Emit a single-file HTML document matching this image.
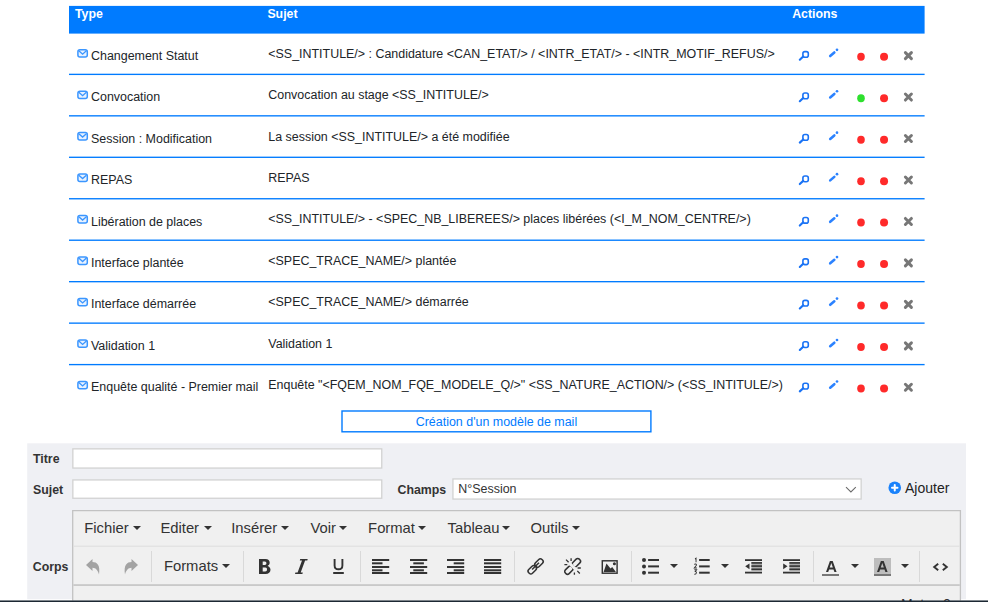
<!DOCTYPE html>
<html><head><meta charset="utf-8">
<style>
*{box-sizing:border-box}
html,body{margin:0;padding:0;background:#fff;width:992px;height:606px;overflow:hidden;position:relative;font-family:"Liberation Sans",sans-serif;color:#212529}
.ov{position:absolute;left:0;top:0}
.t{position:absolute;white-space:nowrap;font-size:12.45px;line-height:14px;color:#212529}
.t.h{color:#fff;font-weight:bold}
.lbl{position:absolute;font-weight:bold;font-size:12.35px;line-height:14px;color:#333}
.bline{position:absolute;left:0;top:0}
.ed{position:absolute;left:72px;top:510px;width:889px;height:90.5px;background:#f0f0f0;border:1px solid #c2c2c2;border-bottom:0}
.mb{position:absolute;font-size:14px;line-height:16px;color:#333;white-space:nowrap}
.car{position:absolute;width:0;height:0;border-top:4px solid #333;border-left:4px solid transparent;border-right:4px solid transparent}
.sep{position:absolute;top:551px;width:1px;height:31px;background:#d9d9d9}
.tic{position:absolute;overflow:visible}

</style></head><body>
<svg class="ov" width="992" height="606" viewBox="0 0 992 606"><rect x="69" y="5.9" width="855.6" height="27.7" fill="#007bff"/><rect x="69" y="73.70" width="855.6" height="1.35" fill="#007bff"/><rect x="69" y="115.16" width="855.6" height="1.35" fill="#007bff"/><rect x="69" y="156.62" width="855.6" height="1.35" fill="#007bff"/><rect x="69" y="198.08" width="855.6" height="1.35" fill="#007bff"/><rect x="69" y="239.54" width="855.6" height="1.35" fill="#007bff"/><rect x="69" y="281.00" width="855.6" height="1.35" fill="#007bff"/><rect x="69" y="322.46" width="855.6" height="1.35" fill="#007bff"/><rect x="69" y="363.92" width="855.6" height="1.35" fill="#007bff"/><g transform="translate(77.10,48.90)"><rect x="0.8" y="0.8" width="9.4" height="7.4" rx="2" fill="#e8f2ff" stroke="#3b96ff" stroke-width="1.5"/><path d="M1.7 1.9 L5.5 5.3 L9.3 1.9" fill="none" stroke="#3b96ff" stroke-width="1.35"/></g><g transform="translate(798.2,50.30)"><rect x="4.7" y="1.3" width="5.4" height="5.7" rx="2" fill="none" stroke="#1a73f5" stroke-width="1.6"/><path d="M1.6 9.4 L5 6.2" stroke="#1a73f5" stroke-width="2.1" stroke-linecap="round"/></g><g transform="translate(828.3,47.50)"><path d="M1.9 8.5 L6 5" stroke="#2b82ff" stroke-width="2.6" stroke-linecap="round"/><circle cx="8.7" cy="2.3" r="1.35" fill="#2b82ff"/></g><ellipse cx="861" cy="56.75" rx="3.8" ry="4" fill="#ff2a2a"/><ellipse cx="884.05" cy="56.75" rx="4" ry="4" fill="#ff2a2a"/><g transform="translate(903.5,50.70)"><path d="M1.9 1.9 L7.9 7.9 M7.9 1.9 L1.9 7.9" stroke="#777" stroke-width="3" stroke-linecap="round"/></g><g transform="translate(77.10,90.36)"><rect x="0.8" y="0.8" width="9.4" height="7.4" rx="2" fill="#e8f2ff" stroke="#3b96ff" stroke-width="1.5"/><path d="M1.7 1.9 L5.5 5.3 L9.3 1.9" fill="none" stroke="#3b96ff" stroke-width="1.35"/></g><g transform="translate(798.2,91.76)"><rect x="4.7" y="1.3" width="5.4" height="5.7" rx="2" fill="none" stroke="#1a73f5" stroke-width="1.6"/><path d="M1.6 9.4 L5 6.2" stroke="#1a73f5" stroke-width="2.1" stroke-linecap="round"/></g><g transform="translate(828.3,88.96)"><path d="M1.9 8.5 L6 5" stroke="#2b82ff" stroke-width="2.6" stroke-linecap="round"/><circle cx="8.7" cy="2.3" r="1.35" fill="#2b82ff"/></g><ellipse cx="861" cy="98.21" rx="3.8" ry="4" fill="#2ee02e"/><ellipse cx="884.05" cy="98.21" rx="4" ry="4" fill="#ff2a2a"/><g transform="translate(903.5,92.16)"><path d="M1.9 1.9 L7.9 7.9 M7.9 1.9 L1.9 7.9" stroke="#777" stroke-width="3" stroke-linecap="round"/></g><g transform="translate(77.10,131.82)"><rect x="0.8" y="0.8" width="9.4" height="7.4" rx="2" fill="#e8f2ff" stroke="#3b96ff" stroke-width="1.5"/><path d="M1.7 1.9 L5.5 5.3 L9.3 1.9" fill="none" stroke="#3b96ff" stroke-width="1.35"/></g><g transform="translate(798.2,133.22)"><rect x="4.7" y="1.3" width="5.4" height="5.7" rx="2" fill="none" stroke="#1a73f5" stroke-width="1.6"/><path d="M1.6 9.4 L5 6.2" stroke="#1a73f5" stroke-width="2.1" stroke-linecap="round"/></g><g transform="translate(828.3,130.42)"><path d="M1.9 8.5 L6 5" stroke="#2b82ff" stroke-width="2.6" stroke-linecap="round"/><circle cx="8.7" cy="2.3" r="1.35" fill="#2b82ff"/></g><ellipse cx="861" cy="139.67" rx="3.8" ry="4" fill="#ff2a2a"/><ellipse cx="884.05" cy="139.67" rx="4" ry="4" fill="#ff2a2a"/><g transform="translate(903.5,133.62)"><path d="M1.9 1.9 L7.9 7.9 M7.9 1.9 L1.9 7.9" stroke="#777" stroke-width="3" stroke-linecap="round"/></g><g transform="translate(77.10,173.28)"><rect x="0.8" y="0.8" width="9.4" height="7.4" rx="2" fill="#e8f2ff" stroke="#3b96ff" stroke-width="1.5"/><path d="M1.7 1.9 L5.5 5.3 L9.3 1.9" fill="none" stroke="#3b96ff" stroke-width="1.35"/></g><g transform="translate(798.2,174.68)"><rect x="4.7" y="1.3" width="5.4" height="5.7" rx="2" fill="none" stroke="#1a73f5" stroke-width="1.6"/><path d="M1.6 9.4 L5 6.2" stroke="#1a73f5" stroke-width="2.1" stroke-linecap="round"/></g><g transform="translate(828.3,171.88)"><path d="M1.9 8.5 L6 5" stroke="#2b82ff" stroke-width="2.6" stroke-linecap="round"/><circle cx="8.7" cy="2.3" r="1.35" fill="#2b82ff"/></g><ellipse cx="861" cy="181.13" rx="3.8" ry="4" fill="#ff2a2a"/><ellipse cx="884.05" cy="181.13" rx="4" ry="4" fill="#ff2a2a"/><g transform="translate(903.5,175.08)"><path d="M1.9 1.9 L7.9 7.9 M7.9 1.9 L1.9 7.9" stroke="#777" stroke-width="3" stroke-linecap="round"/></g><g transform="translate(77.10,214.74)"><rect x="0.8" y="0.8" width="9.4" height="7.4" rx="2" fill="#e8f2ff" stroke="#3b96ff" stroke-width="1.5"/><path d="M1.7 1.9 L5.5 5.3 L9.3 1.9" fill="none" stroke="#3b96ff" stroke-width="1.35"/></g><g transform="translate(798.2,216.14)"><rect x="4.7" y="1.3" width="5.4" height="5.7" rx="2" fill="none" stroke="#1a73f5" stroke-width="1.6"/><path d="M1.6 9.4 L5 6.2" stroke="#1a73f5" stroke-width="2.1" stroke-linecap="round"/></g><g transform="translate(828.3,213.34)"><path d="M1.9 8.5 L6 5" stroke="#2b82ff" stroke-width="2.6" stroke-linecap="round"/><circle cx="8.7" cy="2.3" r="1.35" fill="#2b82ff"/></g><ellipse cx="861" cy="222.59" rx="3.8" ry="4" fill="#ff2a2a"/><ellipse cx="884.05" cy="222.59" rx="4" ry="4" fill="#ff2a2a"/><g transform="translate(903.5,216.54)"><path d="M1.9 1.9 L7.9 7.9 M7.9 1.9 L1.9 7.9" stroke="#777" stroke-width="3" stroke-linecap="round"/></g><g transform="translate(77.10,256.20)"><rect x="0.8" y="0.8" width="9.4" height="7.4" rx="2" fill="#e8f2ff" stroke="#3b96ff" stroke-width="1.5"/><path d="M1.7 1.9 L5.5 5.3 L9.3 1.9" fill="none" stroke="#3b96ff" stroke-width="1.35"/></g><g transform="translate(798.2,257.60)"><rect x="4.7" y="1.3" width="5.4" height="5.7" rx="2" fill="none" stroke="#1a73f5" stroke-width="1.6"/><path d="M1.6 9.4 L5 6.2" stroke="#1a73f5" stroke-width="2.1" stroke-linecap="round"/></g><g transform="translate(828.3,254.80)"><path d="M1.9 8.5 L6 5" stroke="#2b82ff" stroke-width="2.6" stroke-linecap="round"/><circle cx="8.7" cy="2.3" r="1.35" fill="#2b82ff"/></g><ellipse cx="861" cy="264.05" rx="3.8" ry="4" fill="#ff2a2a"/><ellipse cx="884.05" cy="264.05" rx="4" ry="4" fill="#ff2a2a"/><g transform="translate(903.5,258.00)"><path d="M1.9 1.9 L7.9 7.9 M7.9 1.9 L1.9 7.9" stroke="#777" stroke-width="3" stroke-linecap="round"/></g><g transform="translate(77.10,297.66)"><rect x="0.8" y="0.8" width="9.4" height="7.4" rx="2" fill="#e8f2ff" stroke="#3b96ff" stroke-width="1.5"/><path d="M1.7 1.9 L5.5 5.3 L9.3 1.9" fill="none" stroke="#3b96ff" stroke-width="1.35"/></g><g transform="translate(798.2,299.06)"><rect x="4.7" y="1.3" width="5.4" height="5.7" rx="2" fill="none" stroke="#1a73f5" stroke-width="1.6"/><path d="M1.6 9.4 L5 6.2" stroke="#1a73f5" stroke-width="2.1" stroke-linecap="round"/></g><g transform="translate(828.3,296.26)"><path d="M1.9 8.5 L6 5" stroke="#2b82ff" stroke-width="2.6" stroke-linecap="round"/><circle cx="8.7" cy="2.3" r="1.35" fill="#2b82ff"/></g><ellipse cx="861" cy="305.51" rx="3.8" ry="4" fill="#ff2a2a"/><ellipse cx="884.05" cy="305.51" rx="4" ry="4" fill="#ff2a2a"/><g transform="translate(903.5,299.46)"><path d="M1.9 1.9 L7.9 7.9 M7.9 1.9 L1.9 7.9" stroke="#777" stroke-width="3" stroke-linecap="round"/></g><g transform="translate(77.10,339.12)"><rect x="0.8" y="0.8" width="9.4" height="7.4" rx="2" fill="#e8f2ff" stroke="#3b96ff" stroke-width="1.5"/><path d="M1.7 1.9 L5.5 5.3 L9.3 1.9" fill="none" stroke="#3b96ff" stroke-width="1.35"/></g><g transform="translate(798.2,340.52)"><rect x="4.7" y="1.3" width="5.4" height="5.7" rx="2" fill="none" stroke="#1a73f5" stroke-width="1.6"/><path d="M1.6 9.4 L5 6.2" stroke="#1a73f5" stroke-width="2.1" stroke-linecap="round"/></g><g transform="translate(828.3,337.72)"><path d="M1.9 8.5 L6 5" stroke="#2b82ff" stroke-width="2.6" stroke-linecap="round"/><circle cx="8.7" cy="2.3" r="1.35" fill="#2b82ff"/></g><ellipse cx="861" cy="346.97" rx="3.8" ry="4" fill="#ff2a2a"/><ellipse cx="884.05" cy="346.97" rx="4" ry="4" fill="#ff2a2a"/><g transform="translate(903.5,340.92)"><path d="M1.9 1.9 L7.9 7.9 M7.9 1.9 L1.9 7.9" stroke="#777" stroke-width="3" stroke-linecap="round"/></g><g transform="translate(77.10,380.58)"><rect x="0.8" y="0.8" width="9.4" height="7.4" rx="2" fill="#e8f2ff" stroke="#3b96ff" stroke-width="1.5"/><path d="M1.7 1.9 L5.5 5.3 L9.3 1.9" fill="none" stroke="#3b96ff" stroke-width="1.35"/></g><g transform="translate(798.2,381.98)"><rect x="4.7" y="1.3" width="5.4" height="5.7" rx="2" fill="none" stroke="#1a73f5" stroke-width="1.6"/><path d="M1.6 9.4 L5 6.2" stroke="#1a73f5" stroke-width="2.1" stroke-linecap="round"/></g><g transform="translate(828.3,379.18)"><path d="M1.9 8.5 L6 5" stroke="#2b82ff" stroke-width="2.6" stroke-linecap="round"/><circle cx="8.7" cy="2.3" r="1.35" fill="#2b82ff"/></g><ellipse cx="861" cy="388.43" rx="3.8" ry="4" fill="#ff2a2a"/><ellipse cx="884.05" cy="388.43" rx="4" ry="4" fill="#ff2a2a"/><g transform="translate(903.5,382.38)"><path d="M1.9 1.9 L7.9 7.9 M7.9 1.9 L1.9 7.9" stroke="#777" stroke-width="3" stroke-linecap="round"/></g></svg>
<span class="t h" style="left:75px;top:6.69px;font-size:12.35px">Type</span><span class="t h" style="left:267.4px;top:6.69px;font-size:12.35px">Sujet</span><span class="t h" style="left:792.2px;top:6.69px;font-size:12.35px">Actions</span>
<span class="t" style="left:91px;top:48.69px">Changement Statut</span><span class="t" style="left:268.3px;top:46.64px">&lt;SS_INTITULE/&gt; : Candidature &lt;CAN_ETAT/&gt; / &lt;INTR_ETAT/&gt; - &lt;INTR_MOTIF_REFUS/&gt;</span>
<span class="t" style="left:91px;top:90.15px">Convocation</span><span class="t" style="left:268.3px;top:88.10px">Convocation au stage &lt;SS_INTITULE/&gt;</span>
<span class="t" style="left:91px;top:131.61px">Session : Modification</span><span class="t" style="left:268.3px;top:129.56px">La session &lt;SS_INTITULE/&gt; a été modifiée</span>
<span class="t" style="left:91px;top:173.07px">REPAS</span><span class="t" style="left:268.3px;top:171.02px">REPAS</span>
<span class="t" style="left:91px;top:214.53px">Libération de places</span><span class="t" style="left:268.3px;top:212.48px">&lt;SS_INTITULE/&gt; - &lt;SPEC_NB_LIBEREES/&gt; places libérées (&lt;I_M_NOM_CENTRE/&gt;)</span>
<span class="t" style="left:91px;top:255.99px">Interface plantée</span><span class="t" style="left:268.3px;top:253.94px">&lt;SPEC_TRACE_NAME/&gt; plantée</span>
<span class="t" style="left:91px;top:297.45px">Interface démarrée</span><span class="t" style="left:268.3px;top:295.40px">&lt;SPEC_TRACE_NAME/&gt; démarrée</span>
<span class="t" style="left:91px;top:338.91px">Validation 1</span><span class="t" style="left:268.3px;top:336.86px">Validation 1</span>
<span class="t" style="left:91px;top:380.37px">Enquête qualité - Premier mail</span><span class="t" style="left:268.3px;top:378.32px">Enquête &quot;&lt;FQEM_NOM_FQE_MODELE_Q/&gt;&quot; &lt;SS_NATURE_ACTION/&gt; (&lt;SS_INTITULE/&gt;)</span>

<svg class="ov" width="992" height="606" viewBox="0 0 992 606">
<rect x="342" y="411" width="308.9" height="20.8" fill="#fff" stroke="#007bff" stroke-width="1.4"/>
<rect x="27.2" y="443.3" width="938.8" height="155.9" fill="#eff0f4"/>
<rect x="72.85" y="448.85" width="308.9" height="19.2" fill="#fff" stroke="#d2d2d2" stroke-width="1.3"/>
<rect x="72.85" y="479.95" width="308.9" height="18.3" fill="#fff" stroke="#d2d2d2" stroke-width="1.3"/>
<rect x="452.95" y="478.95" width="408.2" height="20.1" fill="#fff" stroke="#d2d2d2" stroke-width="1.3"/>
<path d="M72.7 600.5 V510.6 H960.4 V600.5" fill="#f0f0f0" stroke="#c2c2c2" stroke-width="1.3"/>
<rect x="73.4" y="545.6" width="886.4" height="1.2" fill="#e0e0e0"/>
<rect x="73.4" y="584.3" width="886.4" height="1.5" fill="#c0c0c0"/>
</svg>
<span class="t" style="left:341.3px;width:310.3px;text-align:center;top:415px;color:#007bff;font-size:12.45px">Création d'un modèle de mail</span>
<span class="lbl" style="left:33px;top:451.5px">Titre</span>
<span class="lbl" style="left:33px;top:482.5px">Sujet</span>
<span class="lbl" style="left:397.5px;top:482.5px">Champs</span>
<span class="mb" style="left:458.3px;top:481.5px;font-size:12.45px;line-height:14px">N°Session</span>
<svg class="tic" style="left:845px;top:485.5px" width="12" height="8" viewBox="0 0 12 8"><path d="M1 1.1 L5.9 5.9 L10.8 1.1" fill="none" stroke="#6a6a6a" stroke-width="1.05"/></svg>
<svg class="tic" style="left:888px;top:481px" width="14" height="14" viewBox="0 0 14 14"><circle cx="6.75" cy="6.75" r="6.3" fill="#1a82fb"/><path d="M6.75 4 V9.5 M4 6.75 H9.5" stroke="#fff" stroke-width="2" stroke-linecap="round"/></svg>
<span class="mb" style="left:905px;top:479.5px;font-size:14px;color:#222">Ajouter</span>
<span class="lbl" style="left:32.8px;top:559.5px">Corps</span>
<span class="mb" style="left:84.3px;top:519.8px;font-size:14.8px">Fichier</span>
<i class="car" style="left:132.5px;top:525.9px"></i>
<span class="mb" style="left:160.4px;top:519.8px;font-size:14.8px">Editer</span>
<i class="car" style="left:203.5px;top:525.9px"></i>
<span class="mb" style="left:231.2px;top:519.8px;font-size:14.8px">Insérer</span>
<i class="car" style="left:281px;top:525.9px"></i>
<span class="mb" style="left:310.4px;top:519.8px;font-size:14.8px">Voir</span>
<i class="car" style="left:339.4px;top:525.9px"></i>
<span class="mb" style="left:368.1px;top:519.8px;font-size:14.8px">Format</span>
<i class="car" style="left:417.9px;top:525.9px"></i>
<span class="mb" style="left:447.6px;top:519.8px;font-size:14.8px">Tableau</span>
<i class="car" style="left:501.7px;top:525.9px"></i>
<span class="mb" style="left:530.6px;top:519.8px;font-size:14.8px">Outils</span>
<i class="car" style="left:571.7px;top:525.9px"></i>
<svg class="tic" style="left:85.5px;top:558.5px" width="15" height="16" viewBox="0 0 15 16"><path d="M0 6 L6.5 0 L6.5 3 C11 3 14.5 6 13 15.5 C12 11.5 10 8.7 6.5 8.7 L6.5 12 Z" fill="#a3a3a3"/></svg>
<svg class="tic" style="left:122.7px;top:558.5px" width="15" height="16" viewBox="0 0 15 16"><path d="M15 6 L8.5 0 L8.5 3 C4 3 0.5 6 2 15.5 C3 11.5 5 8.7 8.5 8.7 L8.5 12 Z" fill="#a3a3a3"/></svg>
<div class="sep" style="left:151px"></div>
<span class="mb" style="left:163.9px;top:557.8px;font-size:14.8px">Formats</span>
<i class="car" style="left:222px;top:564.2px"></i>
<div class="sep" style="left:243px"></div>
<svg class="tic" style="left:258.5px;top:558.8px" width="12" height="15" viewBox="0 0 12 15"><path fill-rule="evenodd" fill="#333" d="M0 0 H6.4 C9.3 0 10.7 1.6 10.7 3.8 C10.7 5.3 9.8 6.4 8.6 6.9 C10.3 7.4 11.5 8.8 11.5 10.8 C11.5 13.4 9.6 15 6.6 15 H0 Z M3.7 2.6 V6.1 H5.8 C6.9 6.1 7.4 5.4 7.4 4.35 C7.4 3.3 6.9 2.6 5.8 2.6 Z M3.7 8.6 V12.4 H6.2 C7.5 12.4 8 11.7 8 10.5 C8 9.3 7.5 8.6 6.2 8.6 Z"/></svg>
<svg class="tic" style="left:295.1px;top:558.8px" width="13" height="15" viewBox="0 0 13 15"><path fill="#333" d="M5.2 0 H12.7 L12.3 1.5 H10.1 L5.7 13.5 H7.8 L7.4 15 H0 L0.4 13.5 H2.6 L7 1.5 H4.8 Z"/></svg>
<svg class="tic" style="left:333.3px;top:559px" width="11" height="15" viewBox="0 0 11 15"><path d="M1.6 0 V6.5 C1.6 9 3.3 10.3 5.5 10.3 C7.7 10.3 9.4 9 9.4 6.5 V0" fill="none" stroke="#333" stroke-width="1.9"/><rect x="0.2" y="13" width="10.6" height="2" fill="#333"/></svg>
<div class="sep" style="left:359.5px"></div>
<svg class="tic" style="left:372.4px;top:559px" width="18" height="15" viewBox="0 0 18 15"><rect x="0" y="0" width="17.2" height="2" fill="#333"/><rect x="0" y="3.3" width="10.5" height="2" fill="#333"/><rect x="0" y="7" width="17.2" height="2" fill="#333"/><rect x="0" y="10.3" width="10.5" height="2" fill="#333"/><rect x="0" y="13" width="17.2" height="2" fill="#333"/></svg>
<svg class="tic" style="left:409.5px;top:559px" width="18" height="15" viewBox="0 0 18 15"><rect x="0" y="0" width="17.2" height="2" fill="#333"/><rect x="3.3" y="3.3" width="10.6" height="2" fill="#333"/><rect x="0" y="7" width="17.2" height="2" fill="#333"/><rect x="3.3" y="10.3" width="10.6" height="2" fill="#333"/><rect x="0" y="13" width="17.2" height="2" fill="#333"/></svg>
<svg class="tic" style="left:446.9px;top:559px" width="18" height="15" viewBox="0 0 18 15"><rect x="0" y="0" width="17.2" height="2" fill="#333"/><rect x="6.7" y="3.3" width="10.5" height="2" fill="#333"/><rect x="0" y="7" width="17.2" height="2" fill="#333"/><rect x="6.7" y="10.3" width="10.5" height="2" fill="#333"/><rect x="0" y="13" width="17.2" height="2" fill="#333"/></svg>
<svg class="tic" style="left:484.3px;top:559px" width="18" height="15" viewBox="0 0 18 15"><rect x="0" y="0" width="17.2" height="2" fill="#333"/><rect x="0" y="3.3" width="17.2" height="2" fill="#333"/><rect x="0" y="7" width="17.2" height="2" fill="#333"/><rect x="0" y="10.3" width="17.2" height="2" fill="#333"/><rect x="0" y="13" width="17.2" height="2" fill="#333"/></svg>
<div class="sep" style="left:514.3px"></div>
<svg class="tic" style="left:526.8px;top:557.9px" width="18" height="18" viewBox="0 0 18 18"><g fill="none" stroke="#333" stroke-width="1.3" transform="translate(8.55 8.3) scale(1.17) translate(-8.55 -8.3)"><rect x="9.25" y="1.6" width="4.5" height="7.8" rx="1.9" transform="rotate(45 11.5 5.5)"/><rect x="3.48" y="7.36" width="4.5" height="7.8" rx="1.9" transform="rotate(45 5.73 11.26)"/><path d="M5.6 11.1 L11.5 5.2"/></g></svg>
<svg class="tic" style="left:563.9px;top:557.9px" width="18" height="18" viewBox="0 0 18 18"><g fill="none" stroke="#333" stroke-width="1.3" transform="translate(8.55 8.3) scale(1.17) translate(-8.55 -8.3)"><rect x="9.55" y="1.3" width="4.5" height="7.8" rx="1.9" transform="rotate(45 11.8 5.2)"/><rect x="3.18" y="7.66" width="4.5" height="7.8" rx="1.9" transform="rotate(45 5.43 11.56)"/></g><rect x="3.6" y="6.8" width="10" height="3" fill="#f0f0f0" transform="rotate(45 8.6 8.3)"/><g stroke="#333" stroke-width="1.3"><path d="M2 1.6 L4.6 4.2 M7.1 0.3 V2.9 M0.4 6.7 H3.3 M13.6 10 H16.8 M10.4 14.5 V16.7 M13.3 12.9 L15.8 15.5"/></g></svg>
<svg class="tic" style="left:601.2px;top:559.9px" width="18" height="15" viewBox="0 0 18 15"><rect x="1.3" y="0.8" width="14.8" height="12.4" fill="none" stroke="#333" stroke-width="1.45"/><path d="M2.6 12 L5.5 3.5 L9.5 8.5 L11.2 7.1 L14.9 12 Z" fill="#333"/><circle cx="13.4" cy="3.8" r="1.55" fill="#333"/></svg>
<div class="sep" style="left:631px"></div>
<svg class="tic" style="left:642px;top:558px" width="17" height="17" viewBox="0 0 17 17"><circle cx="2" cy="2" r="2" fill="#333"/><rect x="6.1" y="1" width="10.9" height="2" fill="#333"/><circle cx="2" cy="8.4" r="2" fill="#333"/><rect x="6.1" y="7.4" width="10.9" height="2" fill="#333"/><circle cx="2" cy="14.7" r="2" fill="#333"/><rect x="6.1" y="13.7" width="10.9" height="2" fill="#333"/></svg>
<i class="car" style="left:669.8px;top:564px"></i>
<svg class="tic" style="left:693.5px;top:558px" width="16" height="17" viewBox="0 0 16 17"><rect x="5.1" y="1" width="10.6" height="2" fill="#333"/><rect x="5.1" y="7.4" width="10.6" height="2" fill="#333"/><rect x="5.1" y="13.7" width="10.6" height="2" fill="#333"/><path transform="scale(0.85 1)" d="M1.2 1 L2.4 0.2 V4.2 M0.3 6.5 C1 5.6 3.3 5.8 2.8 7.3 L0.4 10 H3.4 M0.4 11.8 H3 L1.6 13.4 C3.4 13.4 3.4 16.6 0.4 16.2" fill="none" stroke="#333" stroke-width="1.1"/></svg>
<i class="car" style="left:721px;top:564px"></i>
<svg class="tic" style="left:745.4px;top:559px" width="17" height="15" viewBox="0 0 17 15"><rect x="0" y="0.2" width="17" height="1.8" fill="#333"/><rect x="0" y="12.7" width="17" height="1.8" fill="#333"/><rect x="6.4" y="3" width="10.6" height="8.8" fill="#a9a9a9"/><rect x="6.4" y="3.1" width="10.6" height="1.6" fill="#333"/><rect x="6.4" y="6.3" width="10.6" height="1.6" fill="#333"/><rect x="6.4" y="9.5" width="10.6" height="1.6" fill="#333"/><path d="M0.2 7.3 L4.5 4.4 V10.2 Z" fill="#333"/></svg>
<svg class="tic" style="left:782.5px;top:559px" width="17" height="15" viewBox="0 0 17 15"><rect x="0" y="0.2" width="17" height="1.8" fill="#333"/><rect x="0" y="12.7" width="17" height="1.8" fill="#333"/><rect x="6.4" y="3" width="10.6" height="8.8" fill="#a9a9a9"/><rect x="6.4" y="3.1" width="10.6" height="1.6" fill="#333"/><rect x="6.4" y="6.3" width="10.6" height="1.6" fill="#333"/><rect x="6.4" y="9.5" width="10.6" height="1.6" fill="#333"/><path d="M4.5 7.3 L0.2 4.4 V10.2 Z" fill="#333"/></svg>
<div class="sep" style="left:812.5px"></div>
<svg class="tic" style="left:826.2px;top:560.8px" width="11" height="11" viewBox="0 0 11 11"><path fill-rule="evenodd" fill="#333" d="M3.9 0 H6.7 L10.6 10.9 H8.4 L7.5 8.4 H3.1 L2.2 10.9 H0 Z M3.75 6.6 H6.85 L5.3 2.1 Z"/></svg>
<div style="position:absolute;left:822.4px;top:573.8px;width:16.6px;height:2px;background:#777"></div>
<i class="car" style="left:851.3px;top:564px"></i>
<div style="position:absolute;left:874px;top:558px;width:17px;height:17.8px;background:#bdbdbd"></div>
<div style="position:absolute;left:874px;top:573.8px;width:17px;height:2px;background:#777"></div>
<svg class="tic" style="left:876.8px;top:560.8px" width="11" height="11" viewBox="0 0 11 11"><path fill-rule="evenodd" fill="#333" d="M3.9 0 H6.7 L10.6 10.9 H8.4 L7.5 8.4 H3.1 L2.2 10.9 H0 Z M3.75 6.6 H6.85 L5.3 2.1 Z"/></svg>
<i class="car" style="left:901.4px;top:564px"></i>
<div class="sep" style="left:919.2px"></div>
<svg class="tic" style="left:932.8px;top:562.6px" width="15" height="8" viewBox="0 0 15 8"><path d="M5.2 0.8 L1.2 4 L5.2 7.2 M9.8 0.8 L13.8 4 L9.8 7.2" fill="none" stroke="#333" stroke-width="1.9"/></svg>
<div style="position:absolute;left:0;top:0;width:992px;height:600.5px;overflow:hidden;pointer-events:none"><span class="mb" style="left:900.9px;top:596.2px;font-size:14px">Mots : 0</span></div>

<svg class="bline" width="992" height="606"><rect x="0" y="600.45" width="988" height="1.55" fill="#1c2833"/></svg>

</body></html>
